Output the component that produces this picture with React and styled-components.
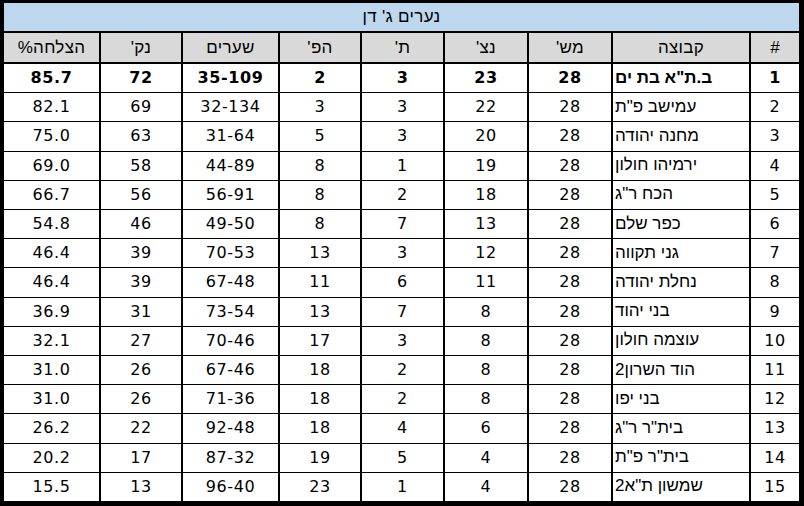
import React from "react";
import styled, { createGlobalStyle } from "styled-components";

const Global = createGlobalStyle`
  html, body { margin: 0; padding: 0; background: #ffffff; }
  body { font-family: "DejaVu Sans", "Liberation Sans", sans-serif; }
`;

const Frame = styled.div`
  width: 804px;
  height: 506px;
  box-sizing: border-box;
  background: #000;
  border-style: solid;
  border-color: #000;
  border-width: 3px 5px 5px 4px;
`;

const Sheet = styled.div`
  direction: rtl;
  height: 100%;
  display: grid;
  grid-template-columns: 48px 136px 82px 82px 81px 80px 95px 80px 95px;
  grid-template-rows: 29px 30px repeat(15, 1fr);
  column-gap: 2px;
  row-gap: 1px;
  font-family: "DejaVu Sans", "Liberation Sans", sans-serif;
  font-size: 16px;
  color: #000;
`;

const Title = styled.div`
  grid-column: 1 / -1;
  margin-bottom: 1px;
  background: #bdd7ee;
  display: flex;
  align-items: center;
  justify-content: center;
  font-family: "Liberation Sans", "DejaVu Sans", sans-serif;
  font-size: 17px;
  letter-spacing: 0.3px;
`;

const HeadCell = styled.div`
  margin-bottom: 1px;
  background: #d9d9d9;
  display: flex;
  align-items: center;
  justify-content: center;
  font-family: "Liberation Sans", "DejaVu Sans", sans-serif;
  font-size: 17px;
  letter-spacing: 0.3px;
`;

const Cell = styled.div`
  background: #fff;
  display: flex;
  align-items: center;
  justify-content: ${(p) => (p.$end ? "flex-end" : "center")};
  padding-left: ${(p) => (p.$end ? "2px" : "0")};
  font-family: ${(p) =>
    p.$end
      ? '"Liberation Sans", "DejaVu Sans", sans-serif'
      : '"DejaVu Sans", "Liberation Sans", sans-serif'};
  font-size: ${(p) => (p.$end ? "17px" : "16px")};
  font-weight: ${(p) => (p.$bold ? 700 : 400)};
  letter-spacing: ${(p) => (p.$end ? "0" : "0.6px")};
  white-space: nowrap;
  padding-bottom: 1px;
`;

const Num = styled.span`
  direction: ltr;
  unicode-bidi: isolate;
`;

const headers = ["#", "קבוצה", "מש'", "נצ'", "ת'", "הפ'", "שערים", "נק'", "הצלחה%"];

const rows = [
  [1, 'ב.ת"א בת ים', 28, 23, 3, 2, "35-109", 72, "85.7"],
  [2, 'עמישב פ"ת', 28, 22, 3, 3, "32-134", 69, "82.1"],
  [3, "מחנה יהודה", 28, 20, 3, 5, "31-64", 63, "75.0"],
  [4, "ירמיהו חולון", 28, 19, 1, 8, "44-89", 58, "69.0"],
  [5, 'הכח ר"ג', 28, 18, 2, 8, "56-91", 56, "66.7"],
  [6, "כפר שלם", 28, 13, 7, 8, "49-50", 46, "54.8"],
  [7, "גני תקווה", 28, 12, 3, 13, "70-53", 39, "46.4"],
  [8, "נחלת יהודה", 28, 11, 6, 11, "67-48", 39, "46.4"],
  [9, "בני יהוד", 28, 8, 7, 13, "73-54", 31, "36.9"],
  [10, "עוצמה חולון", 28, 8, 3, 17, "70-46", 27, "32.1"],
  [11, "הוד השרון2", 28, 8, 2, 18, "67-46", 26, "31.0"],
  [12, "בני יפו", 28, 8, 2, 18, "71-36", 26, "31.0"],
  [13, 'בית"ר ר"ג', 28, 6, 4, 18, "92-48", 22, "26.2"],
  [14, 'בית"ר פ"ת', 28, 4, 5, 19, "87-32", 17, "20.2"],
  [15, 'שמשון ת"א2', 28, 4, 1, 23, "96-40", 13, "15.5"],
];

export default function App() {
  return (
    <>
      <Global />
      <Frame>
        <Sheet>
          <Title>נערים ג' דן</Title>
          {headers.map((h) => (
            <HeadCell key={h}>{h}</HeadCell>
          ))}
          {rows.map((r, i) =>
            r.map((v, j) => (
              <Cell key={`${i}-${j}`} $end={j === 1} $bold={i === 0}>
                {j === 1 ? v : <Num>{v}</Num>}
              </Cell>
            ))
          )}
        </Sheet>
      </Frame>
    </>
  );
}
